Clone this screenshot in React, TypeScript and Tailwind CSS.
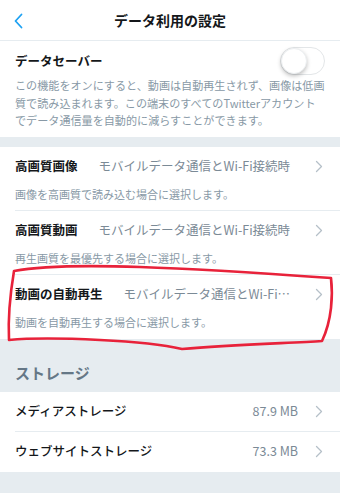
import React from "react";

const Chevron = () => (
  <svg width="8" height="13" viewBox="0 0 8 13" className="shrink-0">
    <path d="M1.5 1.5 L6.5 6.5 L1.5 11.5" fill="none" stroke="#b5c0c8" strokeWidth="1.3" strokeLinecap="round" strokeLinejoin="round" />
  </svg>
);

const SettingRow = ({ title, value, desc, last }: { title: string; value: string; desc: string; last?: boolean }) => (
  <div className="pl-[15px] bg-white">
    <div className={`h-[64px] pr-[17px] flex flex-col ${last ? "" : "border-b border-[#e6ecf0]"}`}>
      <div className="h-[20px] mt-[10px] flex items-center">
        <span className="text-[12.5px] font-bold text-[#14171a] shrink-0">{title}</span>
        <span className="ml-[21px] flex-1 min-w-0 truncate text-[12.5px] text-[#7b8a96]">{value}</span>
        <span className="ml-[16px]"><Chevron /></span>
      </div>
      <div className="mt-[9px] h-[16px] leading-[16px] text-[11px] text-[#8899a6]">{desc}</div>
    </div>
  </div>
);

const StorageRow = ({ title, value, last }: { title: string; value: string; last?: boolean }) => (
  <div className="pl-[15px] bg-white">
    <div className={`h-[40px] pr-[17px] flex items-center ${last ? "" : "border-b border-[#e6ecf0]"}`}>
      <span className="flex-1 text-[12.5px] text-[#14171a] font-medium">{title}</span>
      <span className="text-[12.5px] text-[#7b8a96]">{value}</span>
      <span className="ml-[17px]"><Chevron /></span>
    </div>
  </div>
);

export default function App() {
  return (
    <div className="relative w-[340px] h-[493px] overflow-hidden bg-[#e6ecf0] font-['Noto_Sans_CJK_JP',sans-serif]">
      {/* Header */}
      <div className="h-[41px] bg-white border-b border-[#e6ecf0] relative flex items-center justify-center">
        <svg className="absolute left-[13px] top-[13px]" width="11" height="16" viewBox="0 0 11 16">
          <path d="M8.5 1.5 L2.5 8 L8.5 14.5" fill="none" stroke="#1da1f2" strokeWidth="1.8" strokeLinecap="round" strokeLinejoin="round" />
        </svg>
        <span className="text-[14px] font-bold text-[#14171a]">データ利用の設定</span>
      </div>

      {/* Data saver */}
      <div className="bg-white px-[15px] pt-[6px] pb-[7px]">
        <div className="h-[28px] flex items-center justify-between">
          <span className="text-[12.5px] font-bold text-[#14171a]">データセーバー</span>
          <div className="w-[45px] h-[28px] rounded-full border border-[#e3e6e8] bg-white relative">
            <div className="absolute left-[0px] top-[0px] w-[26px] h-[26px] rounded-full bg-white shadow-[0_2px_4px_rgba(0,0,0,0.25)] border border-[#eceff1]" />
          </div>
        </div>
        <div className="mt-[2px] text-[11.1px] leading-[17.5px] text-[#8899a6] whitespace-nowrap">
          この機能をオンにすると、動画は自動再生されず、画像は低画<br />
          質で読み込まれます。この端末のすべてのTwitterアカウント<br />
          でデータ通信量を自動的に減らすことができます。
        </div>
      </div>

      <div className="h-[10px]" />

      <SettingRow title="高画質画像" value="モバイルデータ通信とWi-Fi接続時" desc="画像を高画質で読み込む場合に選択します。" />
      <SettingRow title="高画質動画" value="モバイルデータ通信とWi-Fi接続時" desc="再生画質を最優先する場合に選択します。" />
      <SettingRow title="動画の自動再生" value="モバイルデータ通信とWi-Fi接続時" desc="動画を自動再生する場合に選択します。" last />

      <div className="h-[53px] px-[15px] pt-[21px]">
        <span className="text-[15px] leading-[22px] font-bold text-[#657786]">ストレージ</span>
      </div>

      <StorageRow title="メディアストレージ" value="87.9 MB" />
      <StorageRow title="ウェブサイトストレージ" value="73.3 MB" last />

      {/* Red hand-drawn annotation */}
      <svg className="absolute left-0 top-0 pointer-events-none" width="340" height="493" viewBox="0 0 340 493">
        <path
          d="M14 271 C40 266 80 265 140 267 C200 269 260 273 331 278 C333 295 332 320 322 341 C290 343 230 345 182 349 C160 344 140 342 100 340 C60 338 30 338 9 340 C8 320 10 295 14 271"
          fill="none"
          stroke="#e8223a"
          strokeWidth="2.6"
          strokeLinecap="round"
          strokeLinejoin="round"
        />
      </svg>
    </div>
  );
}
